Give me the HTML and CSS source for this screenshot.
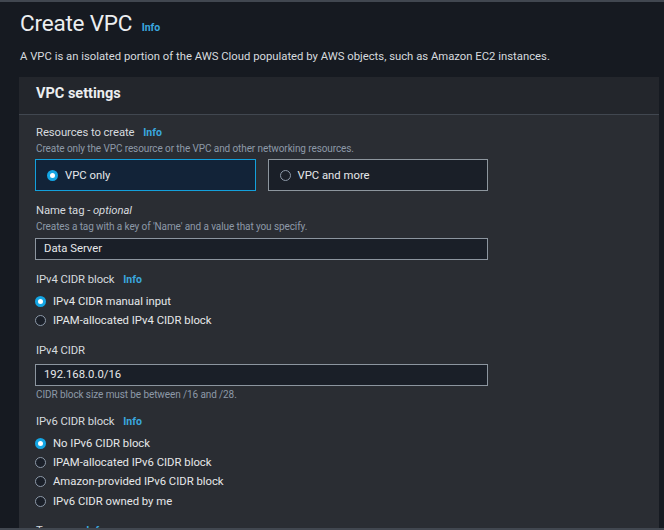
FILE: index.html
```html
<!DOCTYPE html>
<html lang="en">
<head>
<meta charset="utf-8">
<link rel="stylesheet" href="styles.css">
</head>
<body>
<div class="frame">
  <div class="page">
    <h1 class="title">Create VPC <span class="info info-title">Info</span></h1>
    <p class="lead">A VPC is an isolated portion of the AWS Cloud populated by AWS objects, such as Amazon EC2 instances.</p>
    <section class="card">
      <div class="card-head">VPC settings</div>
      <div class="card-body">
        <div class="field">
          <div class="label">Resources to create <span class="info">Info</span></div>
          <div class="desc">Create only the VPC resource or the VPC and other networking resources.</div>
          <div class="tiles">
            <div class="tile tile-on"><span class="radio radio-on"></span>VPC only</div>
            <div class="tile"><span class="radio"></span>VPC and more</div>
          </div>
        </div>
        <div class="field">
          <div class="label">Name tag - <em>optional</em></div>
          <div class="desc">Creates a tag with a key of 'Name' and a value that you specify.</div>
          <div class="input">Data Server</div>
        </div>
        <div class="field">
          <div class="label">IPv4 CIDR block <span class="info">Info</span></div>
          <div class="radios">
            <div class="opt"><span class="radio radio-on"></span>IPv4 CIDR manual input</div>
            <div class="opt"><span class="radio"></span>IPAM-allocated IPv4 CIDR block</div>
          </div>
        </div>
        <div class="field">
          <div class="label label-tight">IPv4 CIDR</div>
          <div class="input">192.168.0.0/16</div>
          <div class="help">CIDR block size must be between /16 and /28.</div>
        </div>
        <div class="field">
          <div class="label">IPv6 CIDR block <span class="info">Info</span></div>
          <div class="radios">
            <div class="opt"><span class="radio radio-on"></span>No IPv6 CIDR block</div>
            <div class="opt"><span class="radio"></span>IPAM-allocated IPv6 CIDR block</div>
            <div class="opt"><span class="radio"></span>Amazon-provided IPv6 CIDR block</div>
            <div class="opt"><span class="radio"></span>IPv6 CIDR owned by me</div>
          </div>
        </div>
        <div class="field">
          <div class="label">Tenancy <span class="info">Info</span></div>
        </div>
      </div>
    </section>
  </div>
</div>
</body>
</html>
```

FILE: styles.css
```css
* { box-sizing: border-box; }
html, body { margin: 0; padding: 0; }
body {
  background: #161a21;
  font-family: Roboto, "Open Sans", sans-serif;
  color: #d1d5db;
}
.frame {
  height: 530px;
  overflow: hidden;
  border-top: 2px solid #414750;
  border-bottom: 2px solid #414750;
}
.page {
  padding: 7px 5px 0 19px;
}
.title {
  margin: 0 0 0 1px;
  font-size: 22.5px;
  letter-spacing: -0.2px;
  line-height: 28px;
  font-weight: 400;
  color: #eceef0;
}
.info {
  color: #3aa7df;
  font-size: 10.5px;
  letter-spacing: 0;
  line-height: 1;
  font-weight: 700;
  margin-left: 6px;
}
.info-title { margin-left: 4px; }
.lead {
  margin: 12px 0 0 1px;
  font-size: 11.3px;
  line-height: 16px;
  color: #d6dadf;
}
.card {
  margin-top: 12px;
  width: 640px;
  background: #2a2d33;
}
.card-head {
  background: #23262c;
  border-bottom: 1px solid #414750;
  height: 38px;
  padding: 7px 17px 0;
  font-size: 14.5px;
  line-height: 20px;
  font-weight: 700;
  color: #eceef0;
}
.card-body {
  padding: 10px 16px 30px;
  display: flex;
  flex-direction: column;
  gap: 12px;
}
.field {
  display: flex;
  flex-direction: column;
  width: 453px;
}
.label {
  font-size: 11.3px;
  letter-spacing: -0.08px;
  line-height: 16px;
  color: #d6dadf;
  padding-left: 1px;
}
.label em { font-style: italic; }
.desc {
  font-size: 10px;
  letter-spacing: -0.1px;
  line-height: 14px;
  margin-top: 1px;
  color: #8d99a8;
  padding-left: 1px;
}
.help {
  font-size: 10px;
  letter-spacing: -0.1px;
  line-height: 14px;
  margin-top: 2px;
  color: #8d99a8;
  padding-left: 1px;
}
.tiles {
  margin-top: 3px;
  display: grid;
  grid-template-columns: 1fr 1fr;
  gap: 12px;
}
.tile {
  height: 32px;
  border: 1px solid #8d969e;
  background: #1a1f28;
  display: flex;
  align-items: center;
  padding-left: 11px;
  font-size: 11.3px;
  color: #e6e8ea;
}
.tile-on {
  border-color: #13a0db;
  background: #122338;
}
.tile .radio { margin-right: 7px; }
.radio {
  width: 11px;
  height: 11px;
  border-radius: 50%;
  border: 1px solid #8d99a8;
  background: #1a1f28;
  flex: none;
  display: inline-block;
}
.radio-on {
  border: 3.5px solid #14a5e3;
  background: #ffffff;
}
.input {
  margin-top: 4px;
  height: 22px;
  border: 1px solid #8c959f;
  background: #1a1f28;
  padding-left: 8px;
  font-size: 11.3px;
  line-height: 20px;
  color: #e6e8ea;
}
.label-tight + .input { margin-top: 5px; }
.radios {
  margin-top: 4px;
  display: flex;
  flex-direction: column;
}
.opt {
  display: flex;
  align-items: center;
  height: 19.3px;
  font-size: 11.3px;
  color: #e6e8ea;
}
.opt .radio { margin-right: 7px; }
```
